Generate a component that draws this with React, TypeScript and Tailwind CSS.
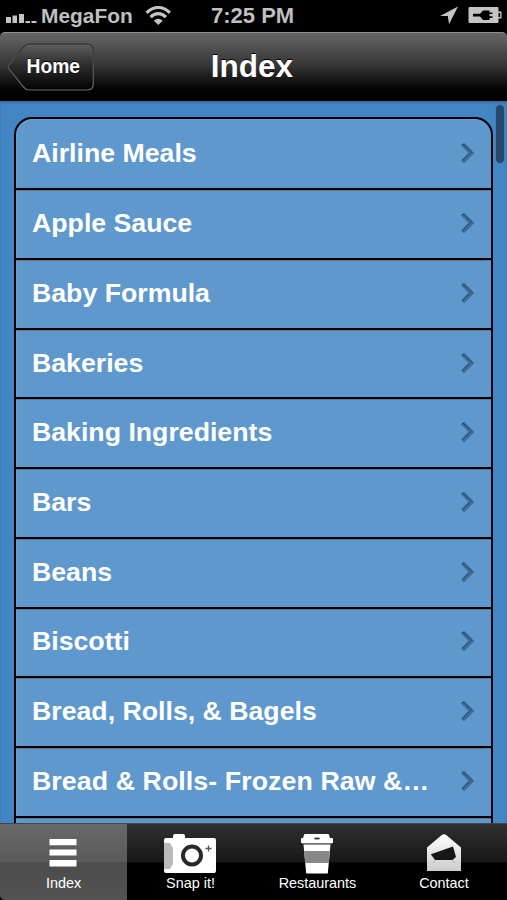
import React from "react";

const items = [
  "Airline Meals",
  "Apple Sauce",
  "Baby Formula",
  "Bakeries",
  "Baking Ingredients",
  "Bars",
  "Beans",
  "Biscotti",
  "Bread, Rolls, & Bagels",
  "Bread & Rolls- Frozen Raw &…",
  "",
];

function StatusBar() {
  return (
    <div className="flex h-8 shrink-0 items-center bg-black pl-[6px] pr-[5px] text-[#bfbfbf]">
      <svg width="32" height="32" viewBox="0 0 32 32" fill="#c4c4c4" className="shrink-0">
        <path d="M0 17h5v6H0zM6.500 15.500h4.500V23H6.500zM13 14h5v9h-5zM19.500 21h4.500v2h-4.500zM25.500 21h5v2h-5z" />
      </svg>
      <span className="ml-[3px] w-[94px] whitespace-nowrap text-[20.9px] font-bold leading-8">MegaFon</span>
      <svg width="26" height="32" viewBox="0 0 26 32" className="ml-[10px] shrink-0" fill="none" stroke="#c4c4c4" strokeWidth="3.2">
        <path d="M1.600 12.800C8.300 5.700 18.200 5.700 24.900 12.800" />
        <path d="M5.600 17.200c4.500-4.800 10.800-4.800 15.300 0" />
        <path d="M8.900 20.800c2.300-2.700 6.400-2.700 8.700 0L13.250 25z" fill="#c4c4c4" stroke="none" />
      </svg>
      <span className="ml-[40px] whitespace-nowrap text-[22px] font-bold leading-8">7:25 PM</span>
      <svg width="20" height="32" viewBox="0 0 20 32" className="ml-auto shrink-0" fill="#c4c4c4">
        <path d="M19 6.500 10 24.300 8.800 16H1z" />
      </svg>
      <svg width="34" height="32" viewBox="0 0 34 32" className="ml-[9px] shrink-0">
        <path d="M1.500 7h28q1 0 1 1v3.600h3v6.800h-3V22q0 1-1 1h-28q-1 0-1-1V8q0-1 1-1z" fill="#c4c4c4" />
        <path d="M30.500 13h1.700v4h-1.700z" fill="#000" />
        <path d="M5 13.800h7l3-3.300h6.500v2h3v1.600h-3v2.200h3v1.600h-3v2H15l-3-3.300H5z" fill="#000" />
      </svg>
    </div>
  );
}

function NavBar() {
  return (
    <header className="grid h-[69px] shrink-0 grid-cols-[1fr_auto_1fr] items-center rounded-t-[5px] border-t border-[#909090] bg-linear-to-b from-[#666] via-[#333] via-50% to-black pl-[7px] pr-[10px]">
      <div className="grid h-[48px] w-[87px] items-center">
        <svg width="87" height="48" viewBox="0 0 87 48" className="col-start-1 row-start-1">
          <defs>
            <linearGradient id="back" x1="0" y1="0" x2="0" y2="1">
              <stop offset="0" stopColor="#5e5e5e" />
              <stop offset=".5" stopColor="#292929" />
              <stop offset="1" stopColor="#020202" />
            </linearGradient>
            <linearGradient id="edge" x1="0" y1="0" x2="0" y2="1">
              <stop offset="0" stopColor="#2c2c2c" />
              <stop offset=".5" stopColor="#555" />
              <stop offset="1" stopColor="#666" />
            </linearGradient>
          </defs>
          <path
            d="M22 1H80Q86.300 1 86.300 7V41Q86.300 47 80 47H22Q19 47 16.500 44L2 26Q.5 24 2 22L16.500 4Q19 1 22 1Z"
            fill="url(#back)"
            stroke="url(#edge)"
            strokeWidth="1.2"
          />
        </svg>
        <span className="col-start-1 row-start-1 pb-px pl-[19.500px] text-[19.3px] font-bold leading-6 text-white [text-shadow:0_-1px_0_#000]">Home</span>
      </div>
      <h1 className="pb-[3px] text-[31.5px] font-bold leading-9 text-white [text-shadow:0_-1px_0_#000]">Index</h1>
      <span />
    </header>
  );
}

function Row({ label }: { label: string }) {
  return (
    <li className="group flex h-[69.7px] shrink-0 items-center justify-between border-b-2 border-black pb-[2px] pl-[16px] pr-[15px] shadow-[0_1px_0_#637787] first:h-[71.4px] first:pb-[1.5px]">
      <span className="whitespace-nowrap text-[26.7px] font-bold leading-8 text-white group-nth-[10]:tracking-[0.1px]">{label}</span>
      <svg width="16" height="22" viewBox="0 0 16 22" className="shrink-0" fill="none">
        <path d="M2.500 2 11.500 11 2.500 20" stroke="#3f6d98" strokeWidth="4" />
        <path d="M1.500 3.500 3 2 12.500 11M2.500 18.500 9.500 11" stroke="#234c71" strokeWidth="1" />
      </svg>
    </li>
  );
}

function CameraIcon() {
  return (
    <svg width="54" height="40" viewBox="0 0 54 40">
      <path d="M1 6q0-2 2-2h7V2q0-2 2-2h8q2 0 2 2v2h29q2 0 2 2v31q0 2-2 2H3q-2 0-2-2z" fill="#fff" />
      <path d="M1 9h6l3 5v16l-3 5H1z" fill="#bbb" />
      <circle cx="29" cy="21.500" r="9" fill="#fff" stroke="#292929" strokeWidth="4" />
      <path d="M45.500 11.500v6M42.500 14.500h6" stroke="#555" strokeWidth="1.300" />
    </svg>
  );
}

function CupIcon() {
  return (
    <svg width="34" height="40" viewBox="0 0 34 40">
      <path d="M4 1q0-1 1-1h23q1 0 1 1l1 3h2q1 0 1 1v4H1V5q0-1 1-1h1z" fill="#fff" />
      <path d="M2 9.500h30" stroke="#777" />
      <ellipse cx="17" cy="4.500" rx="3" ry="1" fill="#333" />
      <path d="M3.500 10.500h27L27.800 39.500H6.200z" fill="#fff" />
      <path d="M4.100 17h25.800l-1.100 12H5.200z" fill="#888" />
    </svg>
  );
}

function ContactIcon() {
  return (
    <svg width="36" height="38" viewBox="0 0 36 38">
      <defs>
        <linearGradient id="paper" x1="0" y1="0" x2="0" y2="1">
          <stop offset="0" stopColor="#fff" />
          <stop offset="1" stopColor="#ccc" />
        </linearGradient>
      </defs>
      <path d="M1 13.500 15.500 1.300Q18-1 20.500 1.300L35 13.500V37H1z" fill="url(#paper)" />
      <path d="M4.800 20.300 27 12.500 30 23 26.500 26H9z" fill="#161616" />
      <path d="M9 26.500 7 29M26.500 26.500l2 2.500" stroke="#a5a5a5" />
    </svg>
  );
}

function TabBar() {
  const tab = "flex h-full flex-col items-center justify-end pb-[8px]";
  const label = "text-[14.4px] leading-[18px] text-white";
  return (
    <nav className="grid h-[77px] shrink-0 grid-cols-[127px_127px_127px_126px] overflow-hidden rounded-bl-[5px] border-t border-[#454545] bg-[linear-gradient(#303030_0px,#171717_38px,#000_39px)]">
      <div className={tab + " bg-[linear-gradient(#696969_0px,#595959_38px,#4c4c4c_39px,#535353)]"}>
        <svg width="28" height="28" viewBox="0 0 28 28" fill="#fff" className="mb-[7px] mr-px">
          <path d="M.5 0h27v6.200H.5zM.5 10.400h27v6.200H.5zM.5 20.900h27v6.600H.5z" />
        </svg>
        <span className={label}>Index</span>
      </div>
      <div className={tab}>
        <div className="mr-[2px] flex"><CameraIcon /></div>
        <span className={label}>Snap it!</span>
      </div>
      <div className={tab}>
        <div className="mr-[2px] flex"><CupIcon /></div>
        <span className={label}>Restaurants</span>
      </div>
      <div className={tab}>
        <div className="mr-px flex pb-[2px]"><ContactIcon /></div>
        <span className={label}>Contact</span>
      </div>
    </nav>
  );
}

export default function App() {
  return (
    <div className="flex h-[900px] w-[507px] flex-col overflow-hidden bg-black font-['Liberation_Sans',Arial,sans-serif]">
      <StatusBar />
      <NavBar />
      <main className="relative min-h-0 flex-1 overflow-hidden bg-[#4286c6] px-[14px] pt-[16px] shadow-[inset_0_2px_2px_#386e9f]">
        <ul className="flex flex-col overflow-hidden rounded-t-[18px] border-2 border-black bg-[#5f98cd] shadow-[inset_1px_1px_0_#719eca]">
          {items.map((item, i) => (
            <Row key={i} label={item} />
          ))}
        </ul>
        <div className="absolute right-[2px] top-[3px] h-[60px] w-[10px] rounded-full border border-[#4a7daf] bg-[#24496d]" />
      </main>
      <TabBar />
    </div>
  );
}
